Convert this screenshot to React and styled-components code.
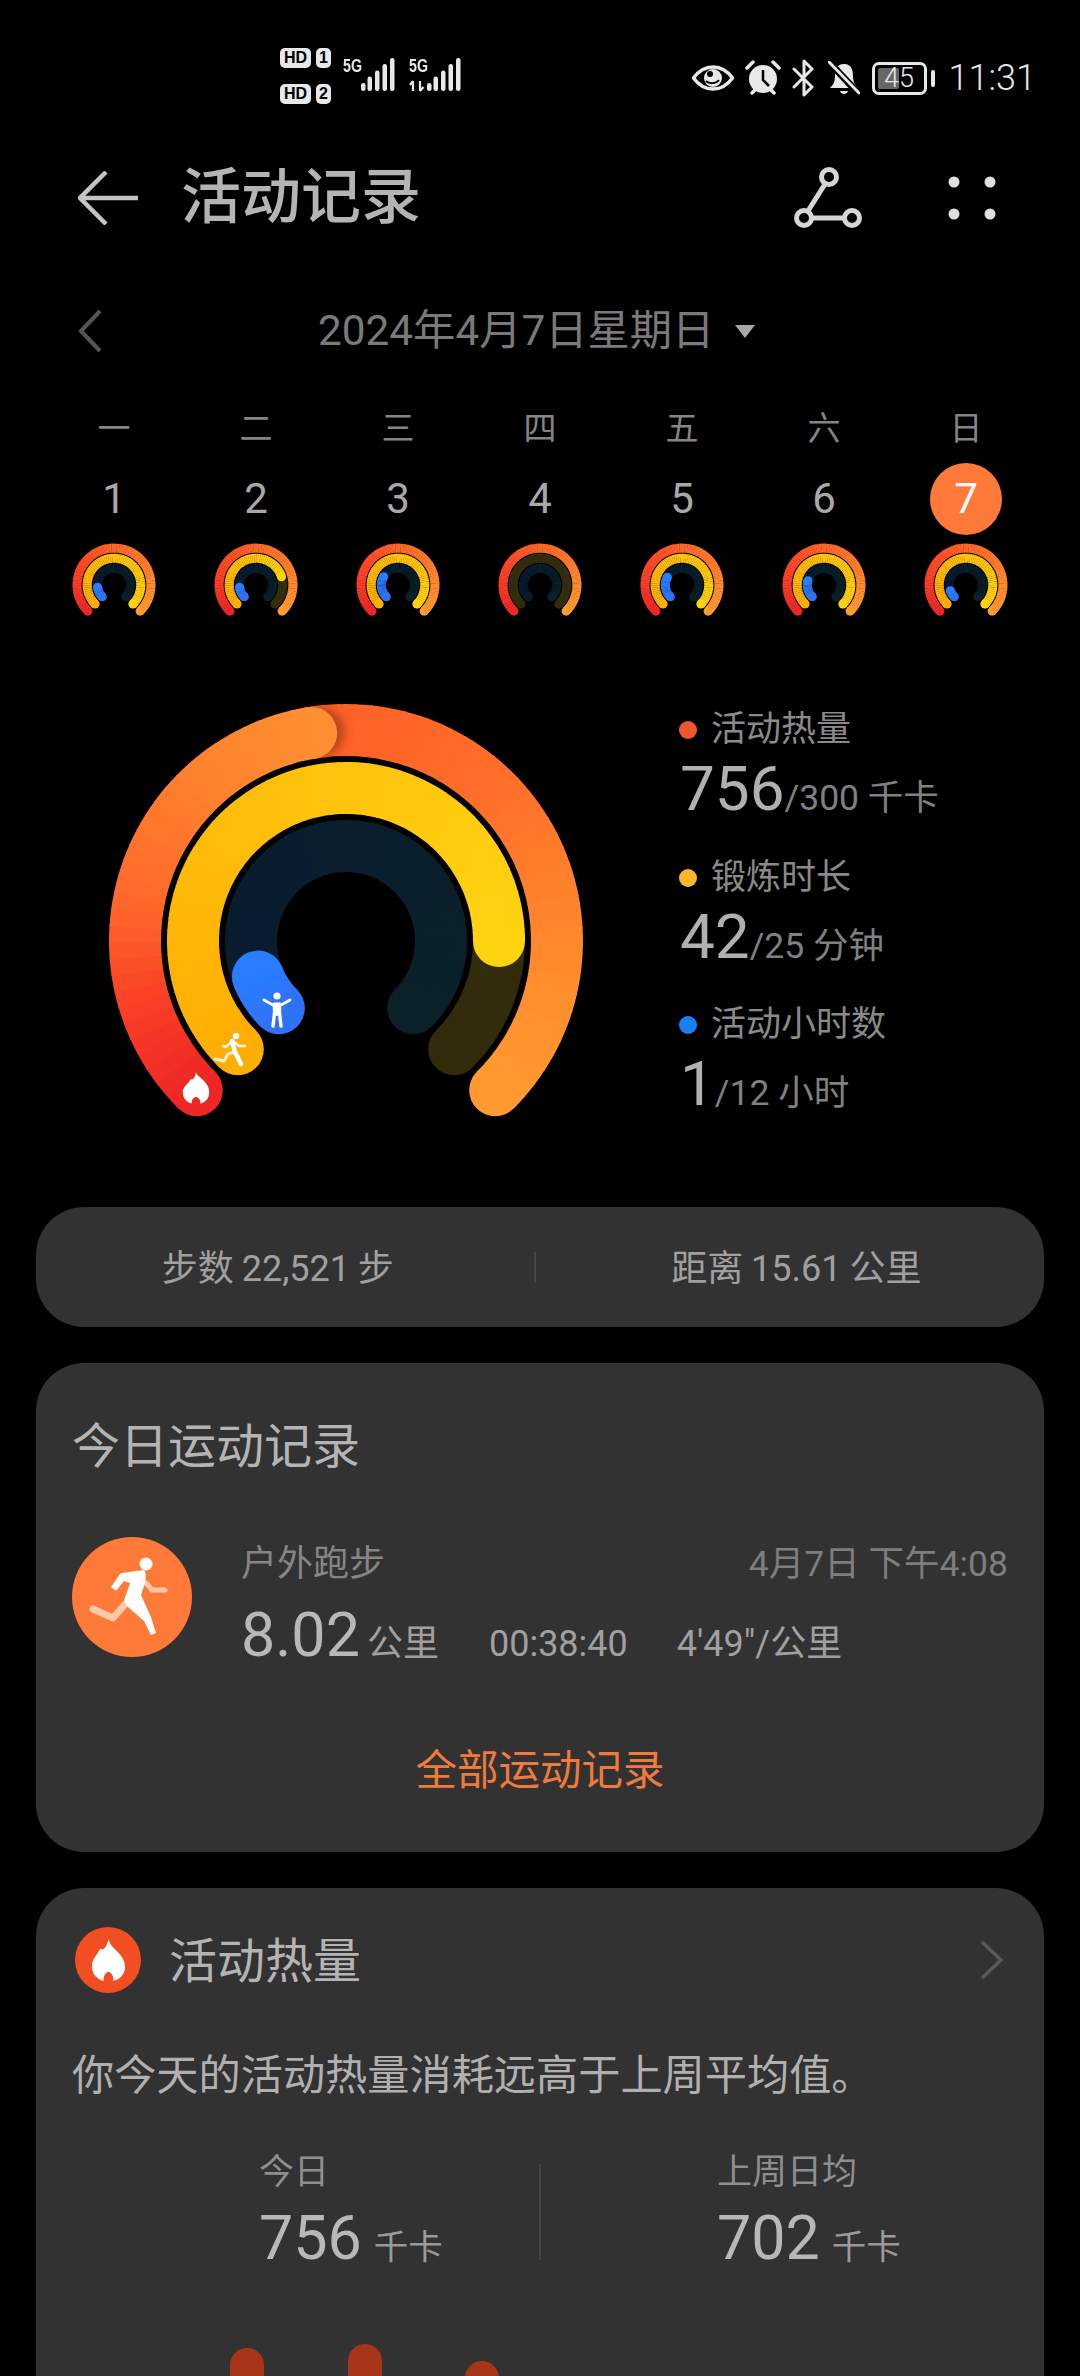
import React from "react";
import styled, { createGlobalStyle } from "styled-components";

const F = `Roboto, "Noto Sans CJK SC", sans-serif`;
const Global = createGlobalStyle`
  html, body { margin: 0; padding: 0; background: #000; }
  body { width: 1080px; height: 2376px; overflow: hidden; font-family: ${F}; }
`;
const Page = styled.div`width:1080px;height:2376px;overflow:hidden;background:#000;display:flex;flex-direction:column;`;

/* status bar */
const Status = styled.div`height:153px;flex:none;padding:46px 44px 0 280px;box-sizing:border-box;display:flex;justify-content:space-between;align-items:flex-start;`;
const StatusLeft = styled.div`display:flex;gap:12px;`;
const SimCol = styled.div`display:flex;flex-direction:column;gap:16px;padding-top:2px;`;
const SimRow = styled.div`display:flex;gap:5px;`;
const Badge = styled.span`height:20px;width:${p=>p.$w}px;background:#e8e8e8;color:#000;border-radius:5px;font:700 16px/20px "Liberation Sans",sans-serif;text-align:center;`;
const Net = styled.div`position:relative;width:${p=>p.$w}px;height:36px;margin-top:12px;`;
const NetLabel = styled.span`position:absolute;left:0;top:0;font:700 19px/16px "Liberation Sans",sans-serif;color:#e8e8e8;transform:scaleX(.75);transform-origin:left;`;
const StatusRight = styled.div`display:flex;align-items:center;height:48px;margin-top:8px;`;
const Battery = styled.div`width:55px;height:33px;margin:0 4px 0 12px;box-sizing:border-box;border:3px solid #e8e8e8;border-radius:7px;position:relative;display:flex;align-items:center;justify-content:center;font:300 27px/27px Roboto,sans-serif;color:#e8e8e8;`;
const BatteryFill = styled.div`position:absolute;left:3px;top:3px;bottom:3px;width:21px;background:#666;border-radius:2px;`;
const BatteryText = styled.span`position:relative;`;
const Nub = styled.div`width:4px;height:17px;background:#e8e8e8;border-radius:2px;`;
const Time = styled.span`font:300 36px/48px Roboto,sans-serif;color:#e6e6e6;margin-left:14px;`;

/* toolbar */
const Toolbar = styled.div`height:90px;flex:none;display:flex;align-items:center;padding:0 78px;`;
const Title = styled.h1`margin:0 0 0 43px;font:500 60px/90px ${F};color:#b4b4b4;flex:1;`;
const ToolIcons = styled.div`display:flex;align-items:center;gap:86px;margin-right:6px;`;

/* date */
const DateRow = styled.div`height:60px;flex:none;margin-top:58px;display:flex;align-items:center;padding-left:78px;`;
const DateText = styled.span`font:400 42.3px/60px ${F};color:#7a7a7a;margin-left:216px;`;
const Caret = styled.div`width:0;height:0;border-left:10px solid transparent;border-right:10px solid transparent;border-top:13px solid #a8a8a8;margin-left:21px;`;

/* week */
const Week = styled.div`display:grid;flex:none;grid-template-columns:repeat(7,142px);padding:0 43px;margin-top:46px;`;
const Day = styled.div`display:flex;flex-direction:column;align-items:center;`;
const Wd = styled.div`font:400 33px/44px ${F};color:#858585;height:44px;`;
const Dn = styled.div`width:72px;height:72px;margin-top:12px;border-radius:50%;display:flex;align-items:center;justify-content:center;font:400 42px/72px Roboto,sans-serif;
  color:${p=>p.$on?"#fff":"#a8a8a8"};background:${p=>p.$on?"#ff7a38":"transparent"};`;
const Mini = styled.div`margin-top:8px;width:84px;height:84px;`;

/* hero */
const Hero = styled.div`display:flex;flex:none;margin-top:-7px;height:587px;`;
const RingBox = styled.div`width:680px;padding:81px 0 0 106px;box-sizing:border-box;`;
const Legend = styled.div`padding-top:88px;display:flex;flex-direction:column;`;
const LegendItem = styled.div`height:147.5px;`;
const LegendHead = styled.div`display:flex;align-items:center;height:44px;gap:14px;margin-left:-1px;`;
const Dot = styled.i`width:18px;height:18px;border-radius:50%;background:${p=>p.$c};`;
const LegendLabel = styled.span`font:400 35px/44px ${F};color:#8a8a8a;`;
const LegendVal = styled.div`margin-top:2px;line-height:70px;white-space:nowrap;color:#808080;font-size:35px;`;
const Big = styled.span`font:400 62px/70px Roboto,sans-serif;color:#b0b0b0;`;
const Sub = styled.span`font:400 35.5px/70px Roboto,"Noto Sans CJK SC",sans-serif;color:#808080;`;

/* cards */
const Pill = styled.div`margin:0 36px;height:120px;flex:none;border-radius:48px;background:#323232;display:flex;align-items:center;`;
const PillCell = styled.div`flex:${p=>p.$f};box-sizing:border-box;padding:${p=>p.$pad};text-align:center;font:400 36px/44px ${F};color:#a0a0a0;white-space:nowrap;word-spacing:-1px;`;
const VLine = styled.div`width:2px;height:${p=>p.$h}px;background:#454545;`;
const Card = styled.section`margin:36px 36px 0;background:#323232;border-radius:48px;box-sizing:border-box;flex:none;padding:${p=>p.$pad};${p=>p.$h?`height:${p.$h}px;`:""}`;
const CardTitle = styled.h2`margin:0;font:400 48px/60px ${F};color:#b4b4b4;`;
const RunRow = styled.div`display:flex;margin-top:60px;`;
const RunIcon = styled.div`width:120px;height:120px;border-radius:50%;background:#ff7a38;flex:none;`;
const RunBody = styled.div`margin-left:49px;flex:1;`;
const RunTop = styled.div`display:flex;justify-content:space-between;font:400 36px/44px ${F};color:#858585;margin-top:5px;`;
const RunDate = styled.span`font-size:35.5px;color:#7e7e7e;`;
const RunStats = styled.div`display:flex;align-items:baseline;margin-top:14px;height:70px;`;
const RunNum = styled.span`font:400 61px/70px Roboto,sans-serif;color:#b8b8b8;`;
const RunUnit = styled.span`font:400 36px/44px ${F};color:#a0a0a0;margin-left:${p=>p.$ml||0}px;`;
const LinkText = styled.div`text-align:center;margin-top:71px;font:400 41.5px/60px ${F};color:#ef7a3e;`;
const HeadRow = styled.div`display:flex;align-items:center;height:66px;padding-right:4px;`;
const FlameCircle = styled.div`width:66px;height:66px;border-radius:50%;background:#f24e22;margin-left:3px;display:flex;align-items:center;justify-content:center;flex:none;`;
const HeadTitle = styled(CardTitle)`margin:3px 0 0 28px;flex:1;`;
const Sentence = styled.p`margin:53px 0 0;font:400 42.2px/60px ${F};color:#b0b0b0;white-space:nowrap;`;
const Compare = styled.div`display:grid;grid-template-columns:1fr 2px 1fr;margin-top:45px;align-items:center;`;
const CmpCol = styled.div`padding-left:${p=>p.$pl}px;`;
const CmpLabel = styled.div`font:400 35px/44px ${F};color:#8f8f8f;`;
const CmpVal = styled.div`display:flex;align-items:baseline;gap:12px;line-height:74px;margin-top:8px;`;
const CmpUnit = styled.span`font:400 34.5px/44px ${F};color:#9a9a9a;`;
const Bars = styled.div`display:flex;gap:83.5px;padding-left:158px;margin-top:71px;align-items:flex-start;`;
const Bar = styled.div`width:34px;height:100px;margin-top:${p=>p.$t}px;background:#a8341a;border-radius:17px 17px 0 0;`;

/* ring */
const polar = (r, a) => {
  const t = (a - 90) * Math.PI / 180;
  return [r * Math.cos(t), r * Math.sin(t)];
};
const arc = (r, a0, a1) => {
  const [x0, y0] = polar(r, a0), [x1, y1] = polar(r, a1);
  return `M${x0.toFixed(2)} ${y0.toFixed(2)}A${r} ${r} 0 ${a1 - a0 > 180 ? 1 : 0} 1 ${x1.toFixed(2)} ${y1.toFixed(2)}`;
};
const hex = (c) => [1, 3, 5].map(i => parseInt(c.slice(i, i + 2), 16));
const mix = (stops, t) => {
  for (let i = 1; i < stops.length; i++) {
    if (t <= stops[i][0]) {
      const [t0, c0] = stops[i - 1], [t1, c1] = stops[i];
      const k = (t - t0) / (t1 - t0 || 1), a = hex(c0), b = hex(c1);
      return `rgb(${a.map((v, j) => Math.round(v + (b[j] - v) * k)).join(",")})`;
    }
  }
  return stops[stops.length - 1][1];
};
const Grad = ({ r, from, to, stops, w = 52 }) => {
  const n = Math.max(2, Math.round((to - from) / 4));
  const segs = [];
  const [sx, sy] = polar(r, from), [ex, ey] = polar(r, to);
  segs.push(<circle key="s" cx={sx} cy={sy} r={w / 2} fill={mix(stops, 0)} />);
  segs.push(<circle key="e" cx={ex} cy={ey} r={w / 2} fill={mix(stops, 1)} />);
  for (let i = 0; i < n; i++) {
    const a0 = from + (to - from) * i / n, a1 = from + (to - from) * (i + 1) / n + .4;
    segs.push(<path key={i} d={arc(r, a0, Math.min(a1, to))} fill="none" strokeWidth={w} stroke={mix(stops, (i + .5) / n)} />);
  }
  return <g>{segs}</g>;
};
const Rings = ({ size, yellowEnd = 135, blueEnd = 248, showIcons, dimYellow, mini }) => (
  <svg width={size} height={size} viewBox="-240 -240 480 480" style={{ display: "block" }}>
    {mini ? (
      <Grad r={211} from={225} to={495} stops={[[0, "#ee2626"], [.3, "#ff4a26"], [.5, "#ff6628"], [1, "#ff9c30"]]} />
    ) : (
      <>
        <defs>
          <filter id="headShadow" x="-50%" y="-50%" width="200%" height="200%"><feGaussianBlur stdDeviation="5" /></filter>
        </defs>
        <Grad r={211} from={-10} to={135} stops={[[0, "#ff5f26"], [.35, "#ff6d2a"], [.7, "#ff882c"], [1, "#ff9a30"]]} />
        <circle cx={polar(211, -8)[0] + 3} cy={polar(211, -8)[1]} r={25} fill="#7a3312" opacity=".55" filter="url(#headShadow)" />
        <Grad r={211} from={225} to={350.5} stops={[[0, "#ee2626"], [.22, "#f93f26"], [.45, "#ff6a2a"], [.75, "#ff822e"], [1, "#ff8f30"]]} />
      </>
    )}
    <path d={arc(153, yellowEnd - 2, 135)} fill="none" stroke="#332c0c" strokeWidth="52" strokeLinecap="round" />
    {dimYellow ? (
      <path d={arc(153, -135, 135)} fill="none" stroke="#332c0c" strokeWidth="52" strokeLinecap="round" />
    ) : (
      <Grad r={153} from={225} to={360 + yellowEnd} stops={[[0, "#ffae04"], [.5, "#ffc10c"], [1, "#ffd310"]]} />
    )}
    <Grad r={95} from={225} to={495} stops={[[0, "#0a1b30"], [.5, "#0a1e2e"], [1, "#0a2128"]]} />
    {blueEnd > 225 && <Grad r={95} from={225} to={blueEnd} stops={[[0, "#2f72f6"], [1, "#2a7dff"]]} />}
    {showIcons && (
      <g fill="#fff">
        <path transform="translate(-150 147) scale(1.1)" d="M0-14C2-9 12-6 12 4C12 10 8 13 4 14C4 11 3 9 0 8C-3 9-4 11-4 14C-8 13-12 10-12 4C-12-2-7-3-5-8C-3-7-1-9 0-14Z" />
        <g transform="translate(-113 108)" stroke="#fff" strokeLinecap="round" strokeLinejoin="round" fill="none">
          <circle cx="3" cy="-13" r="3.2" fill="#fff" stroke="none" />
          <path d="M-1-8L2 3L8 15" strokeWidth="4.6" />
          <path d="M2 3L-5 5L-9 12L-18 10" strokeWidth="3" opacity=".8" />
          <path d="M-1-8L-7-2L-10-3M0-8L6-3L12-3" strokeWidth="2.4" />
        </g>
        <g transform="translate(-69 69)" stroke="#fff" strokeLinecap="round" strokeLinejoin="round" fill="none">
          <circle cx="0" cy="-14" r="3.6" fill="#fff" stroke="none" />
          <path d="M-13-10L-4-5L4-5L13-10" strokeWidth="2.8" />
          <path d="M-2.500-6V3L-4 16M2.500-6V3L4 16M0-6V4" strokeWidth="3.400" />
        </g>
      </g>
    )}
  </svg>
);

const days = [
  ["一", 1, { blueEnd: 262 }], ["二", 2, { yellowEnd: 72, blueEnd: 262 }], ["三", 3, { blueEnd: 300 }],
  ["四", 4, { dimYellow: true, blueEnd: 225 }], ["五", 5, { blueEnd: 298 }], ["六", 6, { blueEnd: 285 }], ["日", 7, { blueEnd: 250 }],
];
const legend = [
  ["#f2552c", "活动热量", "756", "/300 千卡"],
  ["#ffb72a", "锻炼时长", "42", "/25 分钟"],
  ["#1780f8", "活动小时数", "1", "/12 小时"],
];

const S = "#e8e8e8";
const SignalBars = () => [[18, 25], [24.5, 18.6], [32, 12.6], [39.5, 6], [47, 0]].map(([x, y]) => (
  <rect key={x} x={x} y={y} width="4.500" height={33 - y} rx="2.200" fill={S} />
));
export default function App() {
  return (
    <Page>
      <Global />
      <Status>
        <StatusLeft>
          <SimCol>
            <SimRow><Badge $w={31}>HD</Badge><Badge $w={15}>1</Badge></SimRow>
            <SimRow><Badge $w={31}>HD</Badge><Badge $w={15}>2</Badge></SimRow>
          </SimCol>
          <Net $w={54}>
            <NetLabel>5G</NetLabel>
            <svg width="54" height="36" style={{ position: "absolute", left: 0, top: 0 }}><SignalBars /></svg>
          </Net>
          <Net $w={56}>
            <NetLabel>5G</NetLabel>
            <svg width="56" height="36" style={{ position: "absolute", left: 0, top: 0 }}>
              <SignalBars />
              <path d="M4 23V33M4 23L1 27M11 33V23M11 33L14.500 29" stroke={S} strokeWidth="2.200" fill="none" />
            </svg>
          </Net>
        </StatusLeft>
        <StatusRight>
          <svg width="42" height="26" viewBox="0 0 42 26" style={{ marginRight: 11 }}>
            <path d="M1.500 13C8 4 14 2 21 2S34 4 40.500 13C34 22 28 24 21 24S8 22 1.500 13Z" fill="none" stroke={S} strokeWidth="3.500" strokeLinejoin="round" />
            <circle cx="21" cy="13" r="9" fill={S} />
            <path d="M14 16C17 19 24 19 27 15" stroke="#000" strokeWidth="2" fill="none" />
            <circle cx="18" cy="9" r="3" fill="#000" />
          </svg>
          <svg width="36" height="36" viewBox="0 0 36 36" style={{ marginRight: 11 }}>
            <circle cx="18" cy="19" r="14" fill={S} />
            <path d="M18 10V20L24 26" stroke="#000" strokeWidth="2.500" fill="none" />
            <path d="M2 8L8 2M34 8L28 2M7 33L10 30M29 33L26 30" stroke={S} strokeWidth="3.500" strokeLinecap="round" />
          </svg>
          <svg width="24" height="38" viewBox="0 0 24 38" style={{ marginRight: 12 }}>
            <path d="M2 10L20 28L12 36V2L20 10L2 28" fill="none" stroke={S} strokeWidth="3" strokeLinejoin="round" strokeLinecap="round" />
          </svg>
          <svg width="32" height="35" viewBox="0 0 32 35">
            <path d="M16 3C8 3 7 10 7 15C7 21 5 24 2 27H30C27 24 25 21 25 15C25 10 24 3 16 3Z" fill={S} />
            <path d="M12 30C13 34 19 34 20 30Z" fill={S} />
            <path d="M1 1L31 33" stroke="#000" strokeWidth="7" />
            <path d="M1 1L31 32" stroke={S} strokeWidth="3" strokeLinecap="round" />
          </svg>
          <Battery><BatteryFill /><BatteryText>45</BatteryText></Battery>
          <Nub />
          <Time>11:31</Time>
        </StatusRight>
      </Status>
      <Toolbar>
        <svg width="60" height="54" viewBox="0 0 60 54" style={{ flex: "none" }}>
          <path d="M28 1L2 27L28 53M2 27H60" fill="none" stroke="#c4c4c4" strokeWidth="4.500" />
        </svg>
        <Title>活动记录</Title>
        <ToolIcons>
          <svg width="68" height="62" viewBox="0 0 68 62">
            <g fill="none" stroke="#d6d6d6" strokeWidth="5">
              <circle cx="35" cy="10" r="7.500" /><circle cx="10" cy="51" r="7.500" /><circle cx="58" cy="51" r="7.500" />
              <path d="M31 17L14 44M17.500 51H50.500" />
            </g>
          </svg>
          <svg width="48" height="44" viewBox="0 0 48 44">
            <g fill="#e0e0e0"><circle cx="6" cy="6" r="5.500" /><circle cx="42" cy="6" r="5.500" /><circle cx="6" cy="38" r="5.500" /><circle cx="42" cy="38" r="5.500" /></g>
          </svg>
        </ToolIcons>
      </Toolbar>
      <DateRow>
        <svg width="24" height="44" viewBox="0 0 24 44">
          <path d="M22 2L3 22L22 42" fill="none" stroke="#555" strokeWidth="4" />
        </svg>
        <DateText>2024年4月7日星期日</DateText>
        <Caret />
      </DateRow>
      <Week>
        {days.map(([w, n, o]) => (
          <Day key={w}>
            <Wd>{w}</Wd>
            <Dn $on={n === 7}>{n}</Dn>
            <Mini><Rings size={84} mini {...o} /></Mini>
          </Day>
        ))}
      </Week>
      <Hero>
        <RingBox><Rings size={480} showIcons yellowEnd={90} /></RingBox>
        <Legend>
          {legend.map(([c, l, v, s]) => (
            <LegendItem key={l}>
              <LegendHead><Dot $c={c} /><LegendLabel>{l}</LegendLabel></LegendHead>
              <LegendVal><Big>{v}</Big><Sub>{s}</Sub></LegendVal>
            </LegendItem>
          ))}
        </Legend>
      </Hero>
      <Pill>
        <PillCell $f={497} $pad="3px 14px 0 0">步数 22,521 步</PillCell>
        <VLine $h={31} />
        <PillCell $f={509} $pad="3px 0 0 13px">距离 15.61 公里</PillCell>
      </Pill>
      <Card $pad="54px 36px 0" $h={489}>
        <CardTitle>今日运动记录</CardTitle>
        <RunRow>
          <RunIcon>
            <svg width="120" height="120" viewBox="0 0 120 120">
              <path d="M56 64L41 81L21 72" fill="none" stroke="#ffc8a8" strokeWidth="7" strokeLinejoin="round" strokeLinecap="round" />
              <path d="M74 46L80 53H93" fill="none" stroke="#ffc8a8" strokeWidth="5" strokeLinejoin="round" strokeLinecap="round" />
              <circle cx="74" cy="27" r="6.500" fill="#fff" />
              <path d="M50 36L72 33Q75 36 73 46L69 58L79 80L84 96L79 98L72 84L56 70Q50 64 54 58L58 46L52 44L44 54L39 50L48 37Z" fill="#fff" />
            </svg>
          </RunIcon>
          <RunBody>
            <RunTop><span>户外跑步</span><RunDate>4月7日 下午4:08</RunDate></RunTop>
            <RunStats>
              <RunNum>8.02</RunNum><RunUnit $ml={7}>公里</RunUnit>
              <RunUnit $ml={50}>00:38:40</RunUnit>
              <RunUnit $ml={49}>4'49"/公里</RunUnit>
            </RunStats>
          </RunBody>
        </RunRow>
        <LinkText>全部运动记录</LinkText>
      </Card>
      <Card $pad="39px 36px 0">
        <HeadRow>
          <FlameCircle>
            <svg width="35" height="43" viewBox="0 0 38 46">
              <path d="M19 0C21 8 28 12 32 17C35 21 37 25 37 30C37 38 31 44 24 45C25 41 23 37 19 35C15 37 13 41 14 45C7 44 1 38 1 29C1 21 7 17 10 10C13 13 17 9 19 0Z" fill="#fff" />
            </svg>
          </FlameCircle>
          <HeadTitle>活动热量</HeadTitle>
          <svg width="24" height="40" viewBox="0 0 24 40">
            <path d="M2 2L21 20L2 38" fill="none" stroke="#5a5a5a" strokeWidth="3.500" />
          </svg>
        </HeadRow>
        <Sentence>你今天的活动热量消耗远高于上周平均值。</Sentence>
        <Compare>
          <CmpCol $pl={187}>
            <CmpLabel>今日</CmpLabel>
            <CmpVal><RunNum>756</RunNum><CmpUnit>千卡</CmpUnit></CmpVal>
          </CmpCol>
          <VLine $h={96} />
          <CmpCol $pl={176}>
            <CmpLabel>上周日均</CmpLabel>
            <CmpVal><RunNum>702</RunNum><CmpUnit>千卡</CmpUnit></CmpVal>
          </CmpCol>
        </Compare>
        <Bars>
          <Bar $t={4} /><Bar $t={0} /><Bar $t={17} />
        </Bars>
      </Card>
    </Page>
  );
}
